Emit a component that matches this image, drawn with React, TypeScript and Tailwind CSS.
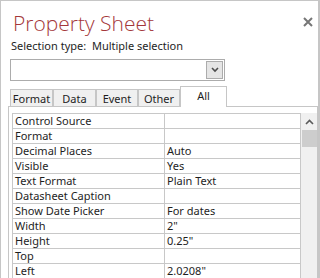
import React from "react";

const rows: [string, string][] = [
  ["Control Source", ""],
  ["Format", ""],
  ["Decimal Places", "Auto"],
  ["Visible", "Yes"],
  ["Text Format", "Plain Text"],
  ["Datasheet Caption", ""],
  ["Show Date Picker", "For dates"],
  ["Width", "2\""],
  ["Height", "0.25\""],
  ["Top", ""],
  ["Left", "2.0208\""],
];

const tabs = [
  { label: "Format", w: "w-[43px]" },
  { label: "Data", w: "w-[43px]" },
  { label: "Event", w: "w-[42px]" },
  { label: "Other", w: "w-[42px]" },
];

export default function App() {
  return (
    <div
      className="relative w-[320px] h-[278px] overflow-hidden bg-white border-l border-t border-r-2 border-[#c6c6c6] text-[11px] text-[#1e1e1e]"
      style={{ fontFamily: '"Noto Sans", "Open Sans", sans-serif' }}
    >
      {/* Close button */}
      <svg
        className="absolute right-[5px] top-[16px]"
        width="10"
        height="10"
        viewBox="0 0 10 10"
      >
        <path d="M1 1 L9 9 M9 1 L1 9" stroke="#767676" strokeWidth="2" />
      </svg>

      {/* Title */}
      <div
        className="pl-[12px] pt-[6px] leading-[32px] text-[21px] font-light text-[#a4373a]"
        style={{ fontFamily: '"Open Sans", "Noto Sans", sans-serif' }}
      >
        Property Sheet
      </div>

      <div className="pl-[10px] leading-[14px] whitespace-pre">
        Selection type:  Multiple selection
      </div>

      {/* Selection dropdown */}
      <div className="ml-[9px] mt-[6px] w-[215px] h-[22px] border border-[#acacac] flex justify-end items-start p-px">
        <div className="w-[17px] h-[18px] bg-[#e5e5e5] border border-[#acacac] flex items-center justify-center">
          <svg width="8" height="6" viewBox="0 0 8 6">
            <path d="M1 1 L4 4 L7 1" fill="none" stroke="#4d4d4d" strokeWidth="1.6" />
          </svg>
        </div>
      </div>

      {/* Tabs */}
      <div className="ml-[9px] mt-[5px] flex items-end h-[20px]">
        {tabs.map((t) => (
          <div
            key={t.label}
            className={`${t.w} h-[17px] bg-[#f0f0f0] border-l border-t border-r border-[#c6c6c6] flex items-center justify-center leading-[15px]`}
          >
            {t.label}
          </div>
        ))}
        <div className="relative z-10 w-[47px] h-[21px] -mb-px bg-white border-l border-t border-r border-[#c6c6c6] flex justify-center pt-[1px] leading-[15px]">
          All
        </div>
      </div>

      {/* Panel */}
      <div className="ml-[7px] w-[310px] border-l border-t border-r border-[#c6c6c6] pt-[6px] pl-[3px] flex">
        <div className="w-[289px] border-l border-t border-[#c8c8c8]">
          {rows.map(([k, v]) => (
            <div key={k} className="flex h-[15px] border-b border-[#c8c8c8] leading-[14px]">
              <div className="w-[152px] border-r border-[#c8c8c8] pl-[2px] whitespace-nowrap">
                {k}
              </div>
              <div className="w-[136px] border-r border-[#c8c8c8] pl-[2px] whitespace-nowrap">
                {v}
              </div>
            </div>
          ))}
        </div>
        <div className="w-[16px] h-[170px] bg-[#f0f0f0] flex flex-col items-center">
          <svg className="mt-[6px]" width="9" height="6" viewBox="0 0 9 6">
            <path d="M1 5 L4.5 1.5 L8 5" fill="none" stroke="#5a5a5a" strokeWidth="1.6" />
          </svg>
          <div className="mt-[5px] w-[15px] h-[17px] bg-[#cdcdcd]" />
        </div>
      </div>
    </div>
  );
}
